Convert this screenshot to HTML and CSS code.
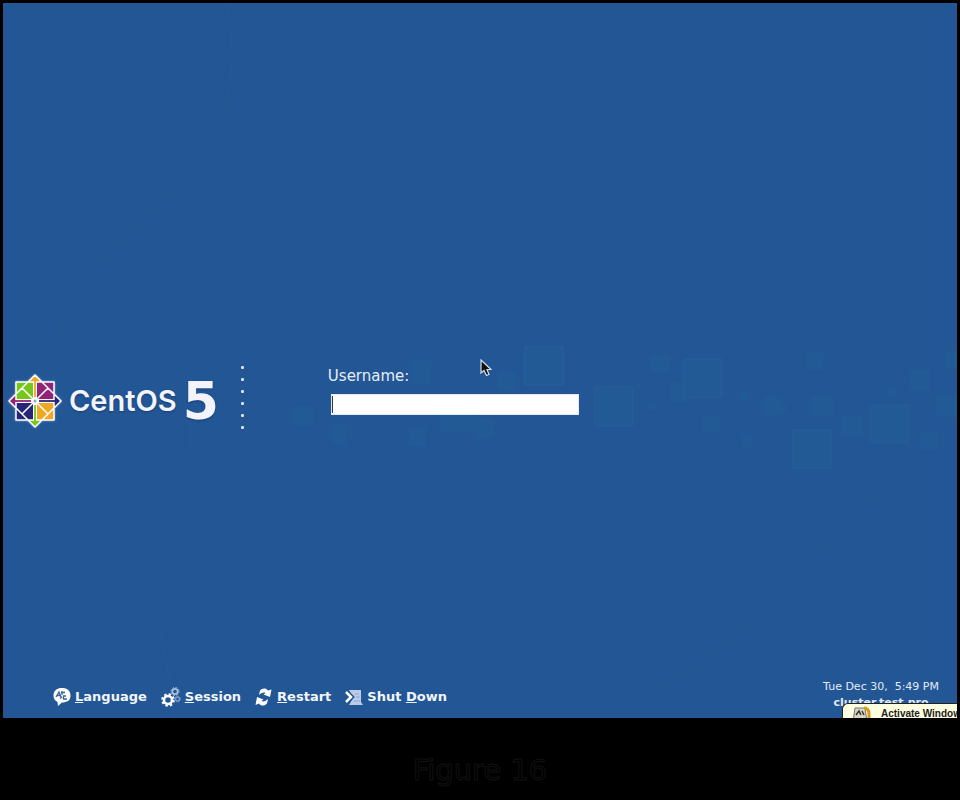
FILE: index.html
```html
<!DOCTYPE html>
<html lang="en">
<head>
<meta charset="utf-8">
<meta name="viewport" content="width=device-width, initial-scale=1">
<title>CentOS 5 Login</title>
<link rel="stylesheet" href="styles.css">
</head>
<body>
<div class="screen">
  <svg class="backdrop" viewBox="3 3 954 715" preserveAspectRatio="xMidYMid slice" aria-hidden="true">
    <g class="curves">
      <path d="M227 3C236 60 235 100 204 150C170 205 115 240 82 285C65 310 55 340 45 368"/>
      <path d="M50 440C75 480 115 525 135 560C155 600 163 640 169 680"/>
      <path d="M954 345C925 425 890 480 840 532C770 605 715 665 630 704"/>
    </g>
    <g class="tiles">
      <rect x="292" y="406" width="22" height="20"/>
      <rect x="332" y="425" width="15" height="18"/>
      <rect x="409" y="428" width="17" height="18"/>
      <rect x="411" y="361" width="20" height="24"/>
      <rect x="440" y="410" width="36" height="22"/>
      <rect x="476" y="418" width="17" height="20"/>
      <rect x="498" y="372" width="18" height="18"/>
      <rect x="651" y="355" width="18" height="17"/>
      <rect x="671" y="382" width="20" height="20"/>
      <rect x="740" y="393" width="8" height="7"/>
      <rect x="649" y="403" width="7" height="7"/>
      <rect x="702" y="415" width="18" height="17"/>
      <rect x="764" y="397" width="18" height="18"/>
      <rect x="779" y="404" width="8" height="8"/>
      <rect x="742" y="436" width="10" height="11"/>
      <rect x="806" y="353" width="17" height="17"/>
      <rect x="812" y="395" width="21" height="21"/>
      <rect x="841" y="416" width="22" height="19"/>
      <rect x="909" y="370" width="21" height="20"/>
      <rect x="887" y="388" width="8" height="8"/>
      <rect x="936" y="395" width="21" height="22"/>
      <rect x="920" y="432" width="19" height="18"/>
      <rect x="945" y="351" width="12" height="17"/>
    </g>
    <g class="tiles large">
      <rect x="525" y="347" width="38" height="38"/>
      <rect x="595" y="387" width="38" height="39"/>
      <rect x="684" y="359" width="38" height="38"/>
      <rect x="793" y="430" width="38" height="38"/>
      <rect x="870" y="405" width="38" height="38"/>
    </g>
    <g class="tiles faint">
      <rect x="301" y="362" width="38" height="37"/>
      <rect x="191" y="413" width="38" height="37"/>
    </g>
  </svg>

  <main class="main">
    <div class="panel">
      <div class="brand">
        <svg class="logo" viewBox="0 0 54 54" aria-hidden="true">
          <path fill="#77c61c" d="M8 8H27V27H8Z"/>
          <path fill="#932279" d="M27 8H46V27H27Z"/>
          <path fill="#262577" d="M8 27H27V46H8Z"/>
          <path fill="#efa724" d="M27 27H46V46H27Z"/>
          <path fill="#efa724" d="M27 1L34 8H20Z"/>
          <path fill="#77c61c" d="M27 53L34 46H20Z"/>
          <path fill="#932279" d="M1 27L8 20V34Z"/>
          <path fill="#262577" d="M53 27L46 20V34Z"/>
          <path fill="none" stroke="#fff" stroke-width="4" d="M27 8V46M8 27H46"/>
          <path fill="none" stroke="#fff" stroke-width="1.500" stroke-linejoin="round" d="M8 8H46V46H8ZM27 27L14 14L27 1L40 14ZM27 27L14 40L27 53L40 40ZM27 27L14 14L1 27L14 40ZM27 27L40 14L53 27L40 40Z"/>
          <path stroke="#efa724" stroke-width="1.800" d="M27 6V23"/>
          <path stroke="#77c61c" stroke-width="1.800" d="M27 31V48"/>
          <path stroke="#932279" stroke-width="1.800" d="M6 27H23"/>
          <path stroke="#262577" stroke-width="1.800" d="M31 27H48"/>
          <circle cx="27" cy="27" r="3" fill="#fff"/>
          <circle cx="27" cy="27" r="1.500" fill="#8fa6cf"/>
        </svg>
        <h1 class="wordmark">CentOS <span class="version">5</span></h1>
      </div>
      <div class="dots" aria-hidden="true"><i></i><i></i><i></i><i></i><i></i><i></i></div>
      <form class="login">
        <label for="username">Username:</label>
        <input id="username" name="username" type="text" autocomplete="off">
      </form>
    </div>
    <svg class="pointer" viewBox="0 0 12 18" aria-hidden="true">
      <path fill="#111" stroke="#d5dce8" stroke-width="1.2" d="M1 1V14L4 11.5L6.500 16.500L9 15.500L7 10.500H11Z"/>
    </svg>
  </main>

  <footer class="bar">
    <nav class="actions">
      <button type="button">
        <svg viewBox="0 0 18 18" aria-hidden="true">
          <path fill="#fff" d="M9 0C14 0 17.500 2.500 17.500 7.500S14 14.500 9 14.500L5 18L4.500 14C1.500 12.500 .5 10.500 .5 7.500C.5 2.500 4 0 9 0Z"/>
          <path fill="none" stroke="#386399" stroke-width="1.3" d="M3 9L6 4L8 9M4 7.500H8M9 3V7M8 4.500H12M13 8H10.500V11H14M7 10.500L9 9"/>
        </svg><span><u>L</u>anguage</span>
      </button>
      <button type="button">
        <svg class="wide" viewBox="0 0 20 20" aria-hidden="true">
          <circle cx="7" cy="13" r="4" fill="none" stroke="#fff" stroke-width="2.500"/>
          <circle cx="7" cy="13" r="5.800" fill="none" stroke="#fff" stroke-width="2" stroke-dasharray="2.400 2.150"/>
          <circle cx="14" cy="4.500" r="2.700" fill="none" stroke="#a9bfdc" stroke-width="1.800"/>
          <circle cx="14" cy="4.500" r="4" fill="none" stroke="#a9bfdc" stroke-width="1" stroke-dasharray="1.600 1.550"/>
          <circle cx="16.500" cy="12" r="2" fill="none" stroke="#7998c4" stroke-width="1.600"/>
          <circle cx="16.500" cy="12" r="3" fill="none" stroke="#7998c4" stroke-width="1" stroke-dasharray="1.300 1.060"/>
        </svg><span><u>S</u>ession</span>
      </button>
      <button type="button">
        <svg viewBox="0 0 18 18" aria-hidden="true">
          <path fill="#fff" d="M5 2.500C7 0 11 -.5 13 2.500L16.500 1.500L15 9L8.500 6.500L10.500 5C9 4 7 4.500 4 7ZM12 15.500C10 18 6 18.500 4 15.500L.5 17L2 9L8.500 11.500L6.500 13C8 14 10 13.500 13 11Z"/>
        </svg><span><u>R</u>estart</span>
      </button>
      <button type="button">
        <svg viewBox="0 0 18 18" aria-hidden="true">
          <path fill="#b9cbe8" d="M4 2H16V14L18 17H4L8 10Z"/>
          <path fill="none" stroke="#8fa9d2" d="M10 6H14M11 9H15M9 13H15"/>
          <path fill="none" stroke="#24518c" stroke-width="4" d="M2 4L7 9L2 14"/>
          <path fill="none" stroke="#fff" stroke-width="2.500" d="M1 4L6 9L1 14"/>
        </svg><span>Shut <u>D</u>own</span>
      </button>
    </nav>
    <div class="status">
      <time datetime="17:49">Tue Dec 30,&nbsp; 5:49 PM</time>
      <strong>cluster.test.pro</strong>
    </div>
  </footer>

  <aside class="balloon">
    <svg viewBox="0 0 18 16" aria-hidden="true">
      <path fill="#d9d6c4" stroke="#77746a" d="M2 2H12L14 16H0Z"/>
      <path fill="none" stroke="#333" stroke-width="1.500" d="M3 9L6 5L8 9M9 5L11 9"/>
      <path fill="none" stroke="#d99b1d" stroke-width="3" d="M11 2C15 2 16 5 16 8V14L12 16"/>
    </svg>
    <span>Activate Window</span>
  </aside>
</div>
<p class="caption">Figure 16</p>
</body>
</html>
```
FILE: styles.css
```css
* {
  box-sizing: border-box;
}

body {
  display: flex;
  flex-direction: column;
  min-height: 100vh;
  margin: 0;
  padding: 3px 3px 0;
  background: #000;
  color: #fff;
  font-family: "DejaVu Sans", sans-serif;
}

.screen {
  position: relative;
  display: flex;
  flex: 1;
  flex-direction: column;
  overflow: hidden;
  background: #225694;
}

.backdrop {
  position: absolute;
  inset: 0;
  width: 100%;
  height: 100%;
}

.curves {
  fill: none;
  stroke: #255992;
  stroke-width: 2;
}

.tiles {
  fill: #225a95;
}

.large {
  stroke: #265f96;
}

.faint {
  fill: none;
  stroke: #265b94;
}

.main {
  position: relative;
  display: flex;
  flex: 1;
  align-items: center;
  padding: 113px 5px 0;
}

.panel {
  display: flex;
  align-items: flex-start;
}

.brand {
  display: flex;
  align-items: center;
  gap: 7px;
  padding-top: 8px;
}

.logo {
  width: 54px;
  height: 54px;
  filter: drop-shadow(0 0 1px #8ba5d2);
}

.wordmark {
  display: flex;
  align-items: center;
  gap: 6px;
  margin: 0;
  color: #f3f3fb;
  font: 600 29px/54px Inter, sans-serif;
  text-shadow: 0 1px 2px #183f72;
}

.version {
  font: bold 52px/52px "DejaVu Sans", sans-serif;
}

.dots {
  display: flex;
  flex-direction: column;
  gap: 9px;
  margin: 0 84px 0 22px;
}

.dots i {
  width: 3px;
  height: 3px;
  border-radius: 1px;
  background: #d7dfea;
}

.login {
  display: flex;
  flex-direction: column;
  gap: 9px;
  padding-top: 1px;
}

.login label {
  color: #e6edf7;
  font-size: 15px;
  line-height: 18px;
}

.login input {
  width: 248px;
  height: 21px;
  margin: 0 0 0 3px;
  padding: 0 4px;
  border: 1px solid #e4ebf5;
  background: linear-gradient(#333, #333) 0 1px / 1px 17px no-repeat #fff;
  color: #000;
  font: 13px "DejaVu Sans", sans-serif;
  outline: none;
}

.pointer {
  position: absolute;
  top: 356px;
  left: 50%;
  width: 12px;
  height: 18px;
}

.bar {
  position: relative;
  display: flex;
  align-items: flex-start;
  justify-content: space-between;
  height: 39px;
  padding: 0 18px 0 50px;
}

.actions {
  display: flex;
  gap: 14px;
  padding-top: 8px;
}

.actions button {
  display: flex;
  align-items: center;
  gap: 4px;
  padding: 0;
  border: 0;
  background: none;
  color: #f1f5fb;
  font: bold 13px/20px "DejaVu Sans", sans-serif;
}

.actions svg {
  width: 18px;
  height: 18px;
}

.actions .wide {
  width: 20px;
  height: 20px;
}

.status {
  display: flex;
  flex-direction: column;
  align-items: center;
  color: #e3ebf6;
  font-size: 11px;
  line-height: 16px;
}

.balloon {
  position: absolute;
  right: 0;
  bottom: 0;
  display: flex;
  gap: 10px;
  width: 115px;
  height: 15px;
  padding: 2px 0 0 10px;
  overflow: hidden;
  border: solid #222;
  border-width: 1px 0 0 1px;
  border-radius: 6px 0 0 0;
  background: #ffffe1;
  color: #222;
  font: bold 10px/16px "Liberation Sans", sans-serif;
  white-space: nowrap;
}

.balloon svg {
  flex: none;
  width: 18px;
  height: 16px;
}

.caption {
  margin: 0;
  padding: 32px 0 10px;
  color: #000;
  font-size: 29px;
  line-height: 40px;
  text-align: center;
  -webkit-text-stroke: 1px #111;
}
```
